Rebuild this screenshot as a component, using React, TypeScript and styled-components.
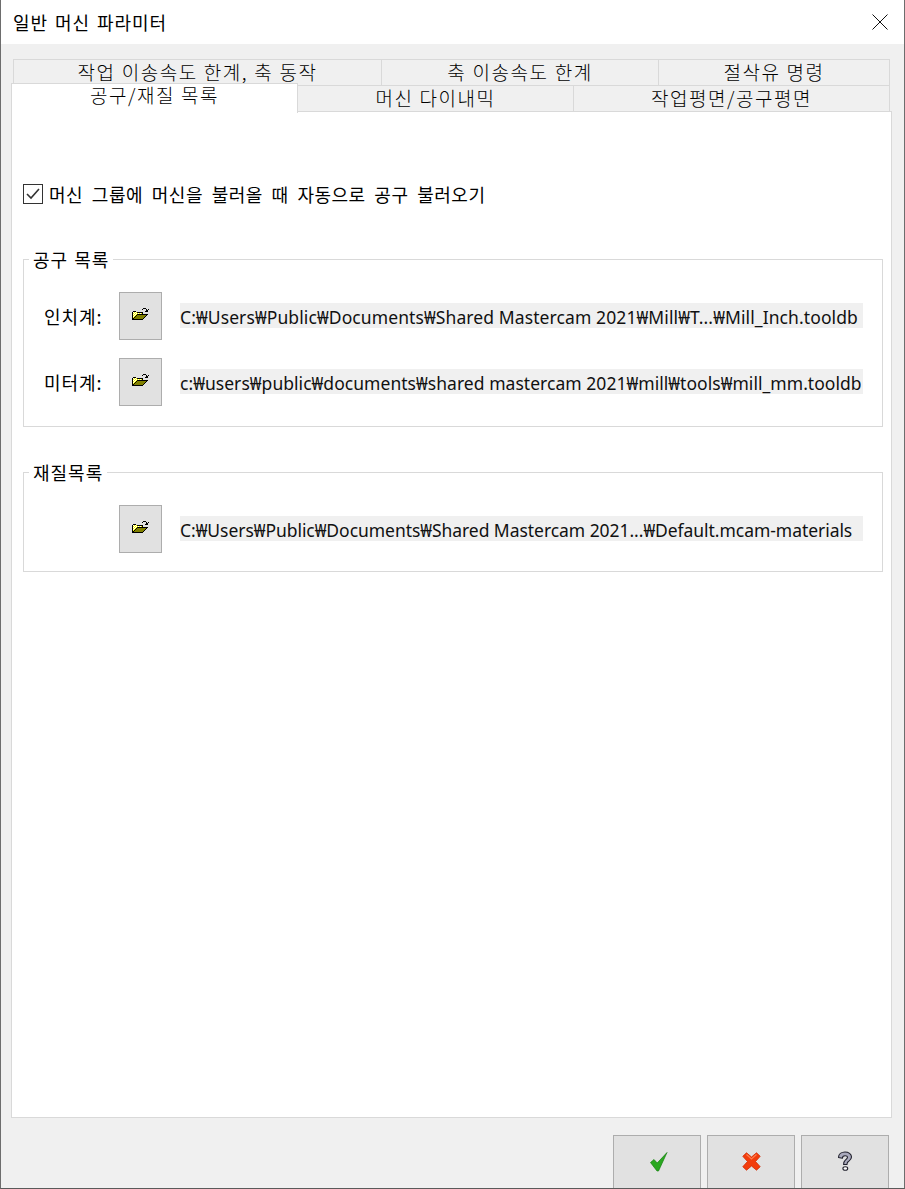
import React from "react";
import styled, { createGlobalStyle } from "styled-components";

const Global = createGlobalStyle`
  html, body { margin: 0; padding: 0; background: #f0f0f0; }
  body { font-family: "Noto Sans CJK KR", "Noto Sans", sans-serif; color: #000; }
`;

const Win = styled.div`
  width: 905px; height: 1189px; box-sizing: border-box; overflow: hidden;
  background: #f0f0f0; border-left: 1px solid #6d6d6d; border-right: 1px solid #6d6d6d;
  border-bottom: 1px solid #5a5a5a; display: flex; flex-direction: column;
`;
const TitleBar = styled.div`
  height: 44px; flex: none; background: #fff; display: flex; align-items: center;
  justify-content: space-between; padding: 0 16px 0 12px; font-size: 18px; letter-spacing: .95px; word-spacing: 2px;
`;
const Title = styled.span`line-height: 44px; margin-top: -1px;`;
const Tabs = styled.div`
  flex: none; margin: 15px 0 0 10px; display: flex; flex-direction: column; width: 881px;
`;
const TabRow = styled.div<{ $pad?: number }>`
  display: flex; height: 26px; padding-left: ${p => p.$pad ?? 0}px; box-sizing: border-box; position: relative;
`;
const Tab = styled.div<{ $w: number; $active?: boolean }>`
  flex: none; width: ${p => p.$w}px; box-sizing: border-box; height: 27px;
  background: #f0f0f0; border: 1px solid #d9d9d9; margin-right: -1px;
  display: flex; align-items: center; justify-content: center;
  font-size: 19px; font-weight: 300; line-height: 22px; letter-spacing: 1.5px; word-spacing: .5px; padding-bottom: 1px; white-space: nowrap;
  ${p => p.$active ? `
    position: relative; z-index: 2; background: #fff; height: 30px; margin-top: -2px;
    border-bottom: none; padding-bottom: 8px; margin-right: -1px;
  ` : ""}
`;
const Panel = styled.div`
  flex: none; box-sizing: border-box; margin-left: 10px; width: 881px; height: 1007px;
  background: #fff; border: 1px solid #d9d9d9; padding: 72px 11px 0 11px; display: flex; flex-direction: column;
`;
const CheckRow = styled.label`
  display: flex; align-items: center; gap: 6px; height: 20px;
  font-size: 18px; letter-spacing: .5px; word-spacing: 4.200px; white-space: nowrap;
`;
const CheckBox = styled.span`
  width: 20px; height: 20px; box-sizing: border-box; border: 1px solid #333; flex: none; display: flex;
  align-items: center; justify-content: center; background: #fff;
`;
const Group = styled.fieldset<{ $h: number; $mt: number }>`
  margin: ${p => p.$mt}px 0 0 0; padding: 0 0 0 0; width: 860px; height: ${p => p.$h}px; box-sizing: border-box;
  border: 1px solid #d9d9d9; min-width: 0; display: block;
`;
const Legend = styled.legend`
  margin-left: 5px; padding: 0 4px; font-size: 18px; line-height: 24px; letter-spacing: 1px; word-spacing: 1px;
`;
const Row = styled.div<{ $mt: number }>`
  display: flex; align-items: center; height: 48px; margin-top: ${p => p.$mt}px;
`;
const RowLabel = styled.div`
  width: 95px; flex: none; box-sizing: border-box; padding-left: 20px; font-size: 18px; letter-spacing: .9px;
  line-height: 26px; white-space: nowrap;
`;
const BrowseBtn = styled.button`
  width: 43px; height: 48px; flex: none; box-sizing: border-box; background: #e1e1e1; border: 1px solid #adadad;
  padding: 0 0 4px 0; display: flex; align-items: center; justify-content: center;
`;
const PathText = styled.div<{ $ls: number }>`
  margin-left: 18px; width: 683px; height: 25px; margin-top: -2px; padding-top: 4px; background: #f0f0f0; box-sizing: border-box; flex: none;
  font-family: "Noto Sans", "Noto Sans CJK KR", sans-serif; font-size: 17.500px; line-height: 21px; white-space: nowrap;
  letter-spacing: ${p => p.$ls}px; color: #111;
`;
const Footer = styled.div`
  flex: 1; display: flex; justify-content: flex-end; gap: 6px; padding: 17px 15px 0 0; align-items: flex-start;
`;
const FootBtn = styled.button`
  width: 88px; height: 60px; box-sizing: border-box; background: #e1e1e1; border: 1px solid #adadad; padding: 0 0 7px 0;
  display: flex; align-items: center; justify-content: center; flex: none;
`;

const folderMap = [
  "...........bbb..",
  "..........b...b.b",
  "..............bb",
  ".bbb.........bbb",
  "bwywybbbbbb.....",
  "bywywywywyb.....",
  "bwywybbbbbbbbbbb",
  "bywybooooooooob.",
  "bwybooooooooob..",
  "bybooooooooob...",
  "bbooooooooob....",
  "bbbbbbbbbbb.....",
];
const folderColors: Record<string, string> = { b: "#000", w: "#fff", y: "#ffff00", o: "#808000" };

const Folder = () => (
  <svg width="17" height="12" viewBox="0 0 17 12" shapeRendering="crispEdges">
    {folderMap.flatMap((row, y) =>
      row.split("").map((c, x) =>
        c === "." ? null : <rect key={`${x}-${y}`} x={x} y={y} width="1" height="1" fill={folderColors[c]} />
      )
    )}
  </svg>
);

const Check = () => (
  <svg width="21" height="20" viewBox="-3 0 21 20">
    <path d="M.5 10.500l3.500-3 3.200 3.500L17 .5 8.500 19H7z" fill="#2aa820" stroke="#14800f" strokeWidth=".7" strokeLinejoin="round" />
  </svg>
);
const Cross = () => (
  <svg width="19" height="19" viewBox="0 0 19 19">
    <path d="M4.500.8L9.500 5l5-4.200 3.700 3.500-4.700 5.200 4.700 5.200-3.700 3.500-5-4.200-5 4.200L.8 14.700l4.700-5.200L.8 4.300z" fill="#f23c0c" stroke="#d32a00" strokeWidth=".8" strokeLinejoin="round" />
    <path d="M4.500 2.500L9.500 7l5-4.500" fill="none" stroke="#ff7b4a" strokeWidth="1.200" />
  </svg>
);
const Help = () => (
  <svg width="16" height="21" viewBox="0 0 16 21">
    <path d="M1.500 6.500C1.500 3 4.500 1 8 1s6.500 2 6.500 5c0 2.800-2.300 3.900-3.600 5-.7.600-.9 1.200-.9 2.500H6.600c0-2.300.4-3.300 1.700-4.400 1.200-1 2.200-1.500 2.200-2.800 0-1-.9-1.600-2.400-1.600-1.700 0-2.700 1-2.700 2.500z" fill="#a9a9bc" stroke="#20202c" strokeWidth="1.100" strokeLinejoin="round" />
    <ellipse cx="8.300" cy="17.500" rx="2.400" ry="1.800" fill="#fff" stroke="#20202c" strokeWidth="1.100" />
  </svg>
);

const Tick = () => (
  <svg width="14" height="12" viewBox="0 0 14 12">
    <path d="M1 6l4 4 8-9" fill="none" stroke="#333" strokeWidth="1.600" />
  </svg>
);

export default function App() {
  return (
    <Win>
      <Global />
      <TitleBar>
        <Title>일반 머신 파라미터</Title>
        <svg width="16" height="16" viewBox="0 0 16 16"><path d="M.5.500l15 15M15.500.500l-15 15" stroke="#111" strokeWidth="1" /></svg>
      </TitleBar>
      <Tabs>
        <TabRow $pad={2}>
          <Tab $w={369}>작업 이송속도 한계, 축 동작</Tab>
          <Tab $w={278}>축 이송속도 한계</Tab>
          <Tab $w={232}>절삭유 명령</Tab>
        </TabRow>
        <TabRow>
          <Tab $w={287} $active>공구/재질 목록</Tab>
          <Tab $w={277}>머신 다이내믹</Tab>
          <Tab $w={317}>작업평면/공구평면</Tab>
        </TabRow>
      </Tabs>
      <Panel>
        <CheckRow>
          <CheckBox><Tick /></CheckBox>
          머신 그룹에 머신을 불러올 때 자동으로 공구 불러오기
        </CheckRow>
        <Group $h={180} $mt={43}>
          <Legend>공구 목록</Legend>
          <Row $mt={21}>
            <RowLabel>인치계:</RowLabel>
            <BrowseBtn><Folder /></BrowseBtn>
            <PathText $ls={0.1}>C:₩Users₩Public₩Documents₩Shared Mastercam 2021₩Mill₩T...₩Mill_Inch.tooldb</PathText>
          </Row>
          <Row $mt={18}>
            <RowLabel>미터계:</RowLabel>
            <BrowseBtn><Folder /></BrowseBtn>
            <PathText $ls={0.04}>c:₩users₩public₩documents₩shared mastercam 2021₩mill₩tools₩mill_mm.tooldb</PathText>
          </Row>
        </Group>
        <Group $h={112} $mt={33}>
          <Legend>재질목록</Legend>
          <Row $mt={21}>
            <RowLabel />
            <BrowseBtn><Folder /></BrowseBtn>
            <PathText $ls={-0.05}>C:₩Users₩Public₩Documents₩Shared Mastercam 2021...₩Default.mcam-materials</PathText>
          </Row>
        </Group>
      </Panel>
      <Footer>
        <FootBtn><Check /></FootBtn>
        <FootBtn><Cross /></FootBtn>
        <FootBtn><Help /></FootBtn>
      </Footer>
    </Win>
  );
}
